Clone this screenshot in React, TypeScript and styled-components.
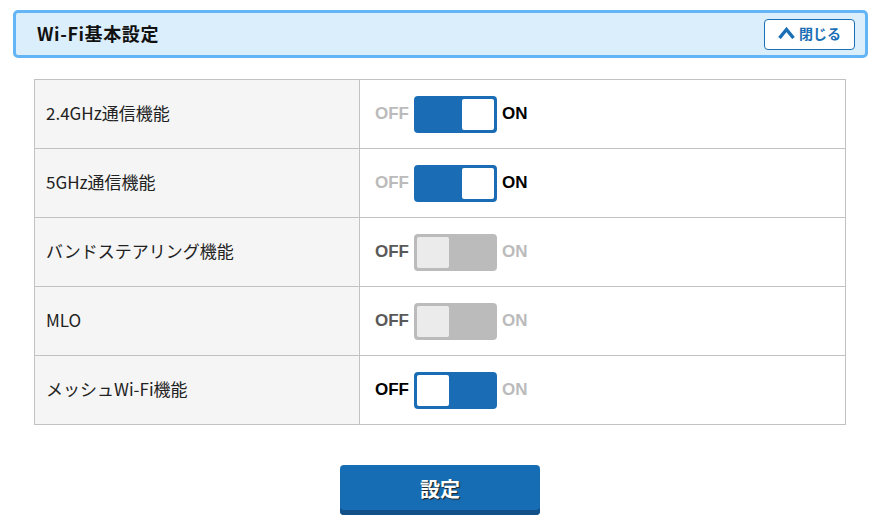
import React, { useState } from 'react';
import styled, { createGlobalStyle } from 'styled-components';

const GlobalStyle = createGlobalStyle`
  body {
    margin: 0;
    background: #fff;
    font-family: "Noto Sans CJK JP", "Noto Sans", sans-serif;
    color: #222;
  }
`;

const Page = styled.div`
  width: 855px;
  padding: 10px 0 0 13px;
`;

const Header = styled.div`
  display: flex;
  align-items: center;
  height: 42px;
  padding: 0 10px 0 21px;
  background: #dbeefc;
  border: 3px solid #64b5f6;
  border-radius: 5px;
`;

const Title = styled.h1`
  margin: 0 0 2px;
  font-size: 18px;
  font-weight: 700;
  letter-spacing: 0.6px;
  color: #111;
`;

const CloseButton = styled.button`
  margin-left: auto;
  display: flex;
  align-items: center;
  justify-content: center;
  gap: 4px;
  width: 91px;
  height: 31px;
  padding: 0 0 2px;
  background: #fff;
  border: 1px solid #1a6fb5;
  border-radius: 4px;
  color: #1a6fb5;
  font-family: inherit;
  font-size: 14px;
  font-weight: 700;
  cursor: pointer;

  svg {
    width: 17px;
    height: 12px;
  }
`;

const Table = styled.div`
  box-sizing: border-box;
  margin: 21px 0 0 21px;
  width: 812px;
  border: 1px solid #c2c2c2;
  border-bottom: none;
`;

const Row = styled.div`
  display: grid;
  grid-template-columns: 325px 1fr;
  height: 68px;
  border-bottom: 1px solid #c2c2c2;
`;

const Label = styled.div`
  display: flex;
  align-items: center;
  padding: 0 0 4px 11px;
  background: #f5f5f5;
  border-right: 1px solid #c2c2c2;
  font-size: 17px;
  color: #222;
`;

const Cell = styled.div`
  display: flex;
  align-items: center;
  padding-left: 15px;
`;

type Tone = 'active' | 'dim' | 'muted';

const StateText = styled.span<{ $tone: Tone }>`
  font-family: "Liberation Sans", Arial, sans-serif;
  font-size: 17px;
  font-weight: 700;
  color: ${(p) => (p.$tone === 'active' ? '#000' : p.$tone === 'muted' ? '#595959' : '#bbb')};
`;

const Track = styled.button<{ $on: boolean; $disabled: boolean }>`
  display: flex;
  justify-content: ${(p) => (p.$on ? 'flex-end' : 'flex-start')};
  box-sizing: border-box;
  width: 83px;
  height: 37px;
  margin: 0 5px;
  padding: 0;
  border: 3px solid ${(p) => (p.$disabled ? '#bbb' : '#1a6db5')};
  border-radius: 4px;
  background: ${(p) => (p.$disabled ? '#bbb' : '#1a6db5')};
  cursor: ${(p) => (p.$disabled ? 'default' : 'pointer')};
`;

const Knob = styled.span<{ $disabled: boolean }>`
  width: 32px;
  height: 31px;
  border-radius: 2px;
  background: ${(p) => (p.$disabled ? '#ebebeb' : '#fff')};
`;

const Footer = styled.div`
  display: flex;
  justify-content: center;
  margin-top: 40px;
  padding-left: 21px;
  width: 812px;
`;

const SubmitButton = styled.button`
  width: 200px;
  height: 50px;
  padding-bottom: 5px;
  background: #176db4;
  border: none;
  border-radius: 4px;
  box-shadow: inset 0 -5px 0 #12508a;
  color: #fff;
  font-family: inherit;
  font-size: 20px;
  font-weight: 700;
  text-shadow: 1px 1px 1px #222;
  cursor: pointer;
`;

interface Setting {
  label: string;
  on: boolean;
  disabled?: boolean;
}

const initial: Setting[] = [
  { label: '2.4GHz通信機能', on: true },
  { label: '5GHz通信機能', on: true },
  { label: 'バンドステアリング機能', on: false, disabled: true },
  { label: 'MLO', on: false, disabled: true },
  { label: 'メッシュWi-Fi機能', on: false },
];

const Toggle: React.FC<{ on: boolean; disabled?: boolean; onToggle: () => void }> = ({
  on,
  disabled = false,
  onToggle,
}) => (
  <Cell>
    <StateText $tone={on ? 'dim' : disabled ? 'muted' : 'active'}>OFF</StateText>
    <Track $on={on} $disabled={disabled} onClick={() => !disabled && onToggle()}>
      <Knob $disabled={disabled} />
    </Track>
    <StateText $tone={on ? 'active' : 'dim'}>ON</StateText>
  </Cell>
);

const App: React.FC = () => {
  const [settings, setSettings] = useState(initial);

  return (
    <Page>
      <GlobalStyle />
      <Header>
        <Title>Wi-Fi基本設定</Title>
        <CloseButton>
          <svg viewBox="0 0 17 12">
            <path d="M1.5 11 L8.5 2.5 L15.5 11" fill="none" stroke="#1a6fb5" strokeWidth="3.4" />
          </svg>
          閉じる
        </CloseButton>
      </Header>
      <Table>
        {settings.map((s, i) => (
          <Row key={s.label}>
            <Label>{s.label}</Label>
            <Toggle
              on={s.on}
              disabled={s.disabled}
              onToggle={() =>
                setSettings(settings.map((x, j) => (j === i ? { ...x, on: !x.on } : x)))
              }
            />
          </Row>
        ))}
      </Table>
      <Footer>
        <SubmitButton>設定</SubmitButton>
      </Footer>
    </Page>
  );
};

export default App;
